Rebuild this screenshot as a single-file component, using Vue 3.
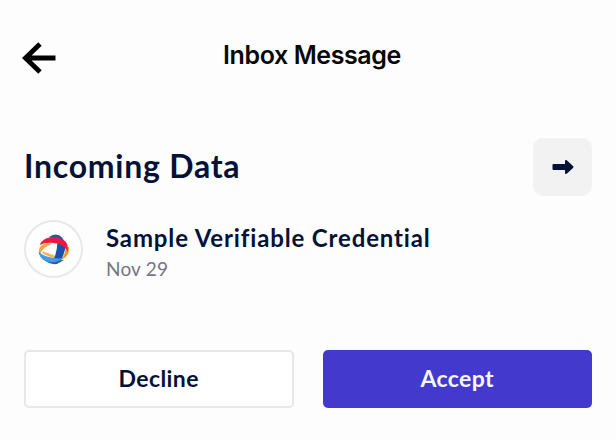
<script setup>
const heading = 'Incoming Data'
const credential = { name: 'Sample Verifiable Credential', date: 'Nov 29' }
</script>

<template>
  <main class="screen">
    <header class="navbar">
      <button class="back" aria-label="Back">
        <svg width="34" height="32" viewBox="0 0 34 32" fill="none" stroke="#000" stroke-width="4.9">
          <path d="M18 2 3.5 16 18 30M3.5 16H33.5" />
        </svg>
      </button>
      <h1 class="title">Inbox Message</h1>
    </header>

    <section class="heading-row">
      <h2 class="heading">{{ heading }}</h2>
      <button class="next" aria-label="Open">
        <svg width="22" height="16" viewBox="0 0 22 16" fill="#051237">
          <path d="M1.5 5H13V2.2C13 1 14.2.6 15 1.4l6 5.6c.6.6.6 1.300 0 1.900l-6 5.600c-.8.8-2 .4-2-.8V11H1.500Q.5 11 .5 10V6Q.5 5 1.500 5Z" />
        </svg>
      </button>
    </section>

    <section class="item">
      <div class="avatar">
        <svg width="32" height="33" viewBox="0 0 32 33">
          <path d="M11 4Q19-1 24 4.500L27 9 16 6Z" fill="#2458a8" />
          <path d="M31 14Q32 23 23 27 27 22 28 14Z" fill="#f39a22" />
          <path d="M14 10.500Q5 9.500 2 14 0 17 2 21 4 15 14 10.500Z" fill="#f5a544" />
          <path d="M5 18.500Q11 20 18 23L17 25.500Q8 23 4 20Z" fill="#f7b35a" />
          <path d="M19.500 9 27.500 11Q27.500 21 22 28L15 28Q19 20 19.500 9Z" fill="#1952a7" />
          <path d="M5 26Q11 32 19 31L26 27 16 26Z" fill="#2762ad" />
          <path d="M1.500 12Q5 5 13 4 26 3.500 29.500 12L30 19Q26 12 19 10.500 9 8.500 1.500 12Z" fill="#ed183d" />
          <path d="M.5 18Q4 23 13 24.500 21 26 25 25 20 30 12 29 1.500 28 .5 18Z" fill="#449be0" />
        </svg>
      </div>
      <div class="details">
        <p class="name">{{ credential.name }}</p>
        <p class="date">{{ credential.date }}</p>
      </div>
    </section>

    <footer class="actions">
      <button class="action decline"><span>Decline</span></button>
      <button class="action accept"><span>Accept</span></button>
    </footer>
  </main>
</template>

<style>
body {
  background: #fdfdfd;
}
</style>

<style scoped>
.screen {
  box-sizing: border-box;
  height: 440px;
  padding: 0 24px;
  overflow: hidden;
  color: #051237;
  font-family: Lato, "Open Sans", sans-serif;
}
h1, h2, p {
  margin: 0;
  white-space: nowrap;
}
button {
  padding: 0;
  border: 0;
  color: inherit;
  font-family: inherit;
}
.navbar {
  display: grid;
  grid-template-columns: 34px 1fr 26px;
  align-items: start;
  height: 94px;
  margin: 0 -2px;
}
.back {
  display: flex;
  margin-top: 42px;
  background: none;
}
.title {
  padding-top: 39px;
  color: #080808;
  font: 600 25px/32px Inter, sans-serif;
  letter-spacing: -0.4px;
  text-align: center;
}
.heading-row {
  display: flex;
  justify-content: space-between;
  align-items: center;
  height: 58px;
  margin-top: 44px;
}
.heading {
  padding-bottom: 2px;
  font-size: 32px;
  line-height: 40px;
  font-weight: 700;
  letter-spacing: 0.75px;
}
.next {
  display: flex;
  justify-content: center;
  align-items: center;
  width: 59px;
  height: 58px;
  border-radius: 10px;
  background: #f2f2f2;
}
.item {
  display: flex;
  gap: 23px;
  height: 58px;
  margin-top: 24px;
}
.avatar {
  box-sizing: border-box;
  display: flex;
  justify-content: center;
  align-items: center;
  width: 59px;
  height: 58px;
  border: 2px solid #e8e8ea;
  border-radius: 50%;
  background: #fff;
}
.details {
  padding-top: 2px;
}
.name {
  font-size: 24px;
  line-height: 32px;
  font-weight: 700;
  letter-spacing: 0.86px;
}
.date {
  font-size: 19px;
  line-height: 30px;
  color: #747584;
  letter-spacing: 0.2px;
}
.actions {
  display: grid;
  grid-template-columns: 1fr 1fr;
  gap: 29px;
  margin-top: 72px;
}
.action {
  height: 58px;
  padding-bottom: 2px;
  border-radius: 5px;
  font-size: 23px;
  line-height: 28px;
  font-weight: 700;
  letter-spacing: 0.4px;
}
.decline {
  border: 2px solid #e8e8ea;
  background: #fff;
}
.accept {
  background: #4339cd;
  color: #f7f7fb;
}
</style>
